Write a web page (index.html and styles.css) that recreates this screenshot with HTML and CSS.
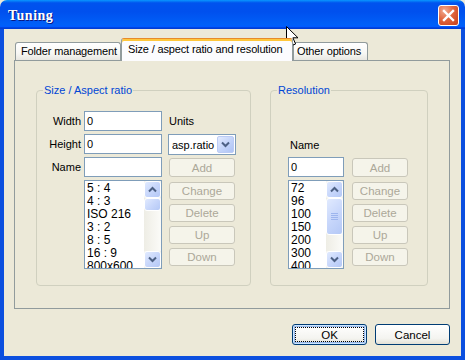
FILE: index.html
```html
<!DOCTYPE html>
<html>
<head>
<meta charset="utf-8">
<title>Tuning</title>
<link rel="stylesheet" href="styles.css">
</head>
<body>
<div class="window">
  <div class="titlebar">
    <span class="title">Tuning</span>
    <div class="close">
      <svg width="13" height="13" viewBox="0 0 13 13"><path d="M2 2 L11 11 M11 2 L2 11" stroke="#fff" stroke-width="2.4" stroke-linecap="square"/></svg>
    </div>
  </div>
  <div class="frame">
    <div class="tabs">
      <div class="tab t1">Folder management</div>
      <div class="tab active">Size / aspect ratio and resolution</div>
      <div class="tab t3">Other options</div>
    </div>
    <div class="panel">
      <div class="group g-left">
        <span class="legend">Size / Aspect ratio</span>
        <div class="grid grid-left">
          <span class="lbl">Width</span>
          <div class="input">0</div>
          <span class="lbl-units">Units</span>

          <span class="lbl">Height</span>
          <div class="input">0</div>
          <div class="combo">
            <span class="combo-text">asp.ratio</span>
            <span class="dd"><svg width="9" height="7" viewBox="0 0 9 7"><path d="M1 1.5 L4.5 5 L8 1.5" fill="none" stroke="#4D6185" stroke-width="2"/></svg></span>
          </div>

          <span class="lbl">Name</span>
          <div class="input"></div>
          <div class="btn add add-left">Add</div>

          <span></span>
          <div class="list">
            <div class="items">
              <div>5 : 4</div>
              <div>4 : 3</div>
              <div>ISO 216</div>
              <div>3 : 2</div>
              <div>8 : 5</div>
              <div>16 : 9</div>
              <div>800x600</div>
            </div>
            <div class="sb">
              <div class="sb-btn"><svg width="9" height="7" viewBox="0 0 9 7"><path d="M1 5.5 L4.5 2 L8 5.5" fill="none" stroke="#4D6185" stroke-width="2"/></svg></div>
              <div class="track"><div class="thumb thumb-small"></div></div>
              <div class="sb-btn"><svg width="9" height="7" viewBox="0 0 9 7"><path d="M1 1.5 L4.5 5 L8 1.5" fill="none" stroke="#4D6185" stroke-width="2"/></svg></div>
            </div>
          </div>
          <div class="btncol btncol-left">
            <div class="btn">Change</div>
            <div class="btn">Delete</div>
            <div class="btn">Up</div>
            <div class="btn">Down</div>
          </div>
        </div>
      </div>

      <div class="group g-right">
        <span class="legend">Resolution</span>
        <div class="grid grid-right">
          <span></span><span></span>
          <span class="lbl-name">Name</span><span></span>
          <div class="input">0</div>
          <div class="btn add">Add</div>
          <div class="list">
            <div class="items">
              <div>72</div>
              <div>96</div>
              <div>100</div>
              <div>150</div>
              <div>200</div>
              <div>300</div>
              <div>400</div>
            </div>
            <div class="sb">
              <div class="sb-btn"><svg width="9" height="7" viewBox="0 0 9 7"><path d="M1 5.5 L4.5 2 L8 5.5" fill="none" stroke="#4D6185" stroke-width="2"/></svg></div>
              <div class="track">
                <div class="thumb thumb-big">
                  <svg width="7" height="7" viewBox="0 0 7 7"><path d="M0 0.5 H7 M0 2.5 H7 M0 4.5 H7 M0 6.5 H7" stroke="#9DB5EE" stroke-width="1"/></svg>
                </div>
              </div>
              <div class="sb-btn"><svg width="9" height="7" viewBox="0 0 9 7"><path d="M1 1.5 L4.5 5 L8 1.5" fill="none" stroke="#4D6185" stroke-width="2"/></svg></div>
            </div>
          </div>
          <div class="btncol">
            <div class="btn">Change</div>
            <div class="btn">Delete</div>
            <div class="btn">Up</div>
            <div class="btn">Down</div>
          </div>
        </div>
      </div>
    </div>
    <div class="footer">
      <div class="pbtn ok">OK</div>
      <div class="pbtn">Cancel</div>
    </div>
  </div>
  <svg class="cursor" width="13" height="20" viewBox="0 0 13 20"><path d="M0.5 0.5 L0.5 16.5 L4.5 12.8 L7.3 19 L9.6 18 L6.9 11.8 L12 11.8 Z" fill="#fff" stroke="#000" stroke-width="1" stroke-linejoin="miter"/></svg>
</div>
</body>
</html>
```

FILE: styles.css
```css
html, body {
  margin: 0;
  padding: 0;
  background: #ECE9D8;
}
body {
  font-family: "Liberation Sans", Arial, sans-serif;
  font-size: 11px;
  color: #000;
}
.window {
  position: relative;
  width: 465px;
  height: 360px;
  overflow: hidden;
}
.titlebar {
  box-sizing: border-box;
  height: 29px;
  display: flex;
  align-items: center;
  padding: 2px 6px 0 8px;
  border-radius: 7px 7px 0 0;
  background: linear-gradient(to bottom, #0997FF 0%, #0053EE 10%, #0050EE 40%, #0060F8 85%, #005BFF 92%, #003DD7 96%, #003DD7 100%);
}
.title {
  color: #fff;
  font-family: "Liberation Serif", "Times New Roman", serif;
  font-weight: bold;
  font-size: 14px;
  letter-spacing: 0.5px;
  text-shadow: 1px 1px 0 #0A1883;
}
.close {
  margin-left: auto;
  box-sizing: border-box;
  width: 21px;
  height: 21px;
  border: 1px solid #fff;
  border-radius: 3px;
  background: radial-gradient(circle at 30% 25%, #F2AB90 0%, #E0673F 45%, #C63E18 100%);
  display: flex;
  align-items: center;
  justify-content: center;
}
.frame {
  box-sizing: border-box;
  height: 331px;
  border: 4px solid #0B4FDF;
  border-top: 0;
  background: #ECE9D8;
  padding: 9px 11px 0 10px;
}
.tabs {
  display: flex;
  align-items: flex-end;
  height: 22px;
  padding-left: 1px;
}
.tab {
  box-sizing: border-box;
  height: 18px;
  border: 1px solid #919B9C;
  border-bottom: 0;
  border-radius: 3px 3px 0 0;
  background: linear-gradient(to bottom, #FFFFFF 0%, #F7F7F4 60%, #E8E7E1 100%);
  line-height: 17px;
  white-space: nowrap;
  letter-spacing: -0.15px;
}
.t1 {
  width: 106px;
  padding-left: 5px;
}
.t3 {
  width: 75px;
  padding-left: 3px;
}
.active {
  position: relative;
  z-index: 1;
  width: 172px;
  height: 23px;
  margin-bottom: -1px;
  padding: 2px 0 0 6px;
  background: #FCFCFE;
  border-top: 1px solid #E68B2C;
  box-shadow: inset 0 2px 0 #FFC73C;
}
.panel {
  box-sizing: border-box;
  width: 436px;
  height: 249px;
  border: 1px solid #919B9C;
  padding: 29px 0 0 21px;
  display: flex;
  gap: 19px;
  background: #ECE9D8;
}
.group {
  position: relative;
  box-sizing: border-box;
  height: 196px;
  border: 1px solid #D0D0BF;
  border-radius: 4px;
}
.g-left { width: 215px; }
.g-right { width: 158px; }
.legend {
  position: absolute;
  top: -7px;
  left: 6px;
  padding: 0 1px;
  line-height: 13px;
  background: #ECE9D8;
  color: #0046D5;
}
.grid {
  display: grid;
  grid-template-rows: 20px 20px 20px 89px;
  row-gap: 3px;
  padding-top: 20px;
}
.grid-left {
  grid-template-columns: 44px 78px 71px;
  column-gap: 3px;
}
.grid-right {
  grid-template-columns: 56px 56px;
  column-gap: 8px;
  padding-left: 17px;
}
.lbl {
  align-self: center;
  text-align: right;
}
.lbl-units {
  align-self: center;
  margin-left: 4px;
}
.lbl-name {
  align-self: center;
  padding: 2px 0 0 2px;
}
.input {
  box-sizing: border-box;
  height: 20px;
  border: 1px solid #7F9DB9;
  background: #fff;
  padding-left: 2px;
  line-height: 18px;
}
.combo {
  box-sizing: border-box;
  margin-left: 3px;
  width: 68px;
  height: 21px;
  border: 1px solid #7F9DB9;
  background: #fff;
  display: flex;
  align-items: center;
  padding: 1px;
}
.combo-text {
  flex: 1;
  padding-left: 2px;
  font-size: 11px;
  white-space: nowrap;
}
.dd {
  flex: none;
  box-sizing: border-box;
  width: 17px;
  height: 17px;
  border: 1px solid #BBCBF5;
  border-radius: 2px;
  background: linear-gradient(135deg, #E3EBFE 0%, #C5D5FA 50%, #AEC3F5 100%);
  display: flex;
  align-items: center;
  justify-content: center;
}
.btn {
  box-sizing: border-box;
  height: 18px;
  border: 1px solid #C9C7BA;
  border-radius: 3px;
  background: #F5F4EA;
  color: #ACA899;
  display: flex;
  align-items: center;
  justify-content: center;
  font-size: 11.5px;
}
.add {
  height: 19px;
  align-self: end;
}
.add-left {
  margin-left: 4px;
  width: 66px;
}
.btncol {
  display: flex;
  flex-direction: column;
  gap: 4px;
  padding-top: 2px;
}
.btncol-left {
  margin-left: 4px;
  width: 66px;
}
.list {
  box-sizing: border-box;
  height: 89px;
  border: 1px solid #7F9DB9;
  background: #fff;
  display: flex;
  overflow: hidden;
}
.items {
  flex: 1;
  padding: 1px 0 0 2px;
  font-size: 12px;
  line-height: 13px;
  overflow: hidden;
  white-space: nowrap;
}
.sb {
  width: 17px;
  display: flex;
  flex-direction: column;
  background: #F4F3EE;
}
.sb-btn, .thumb {
  box-sizing: border-box;
  border: 1px solid #fff;
  border-radius: 3px;
  background: linear-gradient(135deg, #E1EAFE 0%, #C8D7FB 50%, #B4C8F6 100%);
}
.sb-btn {
  height: 17px;
  display: flex;
  align-items: center;
  justify-content: center;
}
.track {
  flex: 1;
  background: linear-gradient(to right, #EEEDE5, #FBFBF8);
}
.thumb {
  display: flex;
  align-items: center;
  justify-content: center;
}
.thumb-small { height: 13px; }
.thumb-big { height: 37px; }
.footer {
  display: flex;
  justify-content: flex-end;
  gap: 8px;
  margin-top: 15px;
}
.pbtn {
  box-sizing: border-box;
  width: 75px;
  height: 21px;
  border: 1px solid #003C74;
  border-radius: 3px;
  background: linear-gradient(to bottom, #FFFFFF 0%, #F4F4F0 70%, #E3E0D6 100%);
  display: flex;
  align-items: center;
  justify-content: center;
  font-size: 11.5px;
}
.ok {
  box-shadow: inset 0 0 0 1px #CEE7FF, inset 0 0 0 2px #98B8EA;
  outline: 1px dotted #000;
  outline-offset: -4px;
}
.cursor {
  position: absolute;
  left: 286px;
  top: 26px;
}
```
